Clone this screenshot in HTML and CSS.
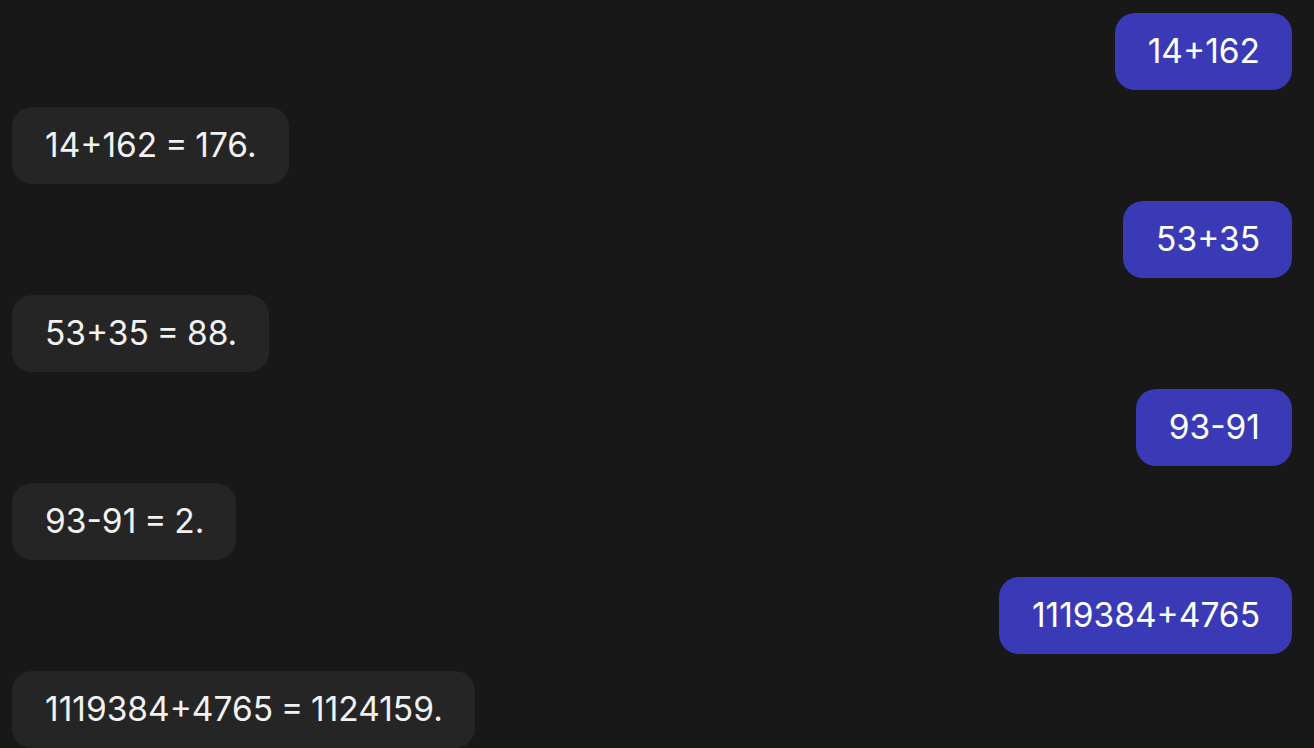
FILE: index.html
```html
<!DOCTYPE html>
<html lang="en">
<head>
    <meta charset="UTF-8">
    <meta name="viewport" content="width=device-width, initial-scale=1.0">
    <title>Chat</title>
    <link rel="stylesheet" href="styles.css">
</head>
<body>
    <div class="chat">
        <div class="msg user">14+162</div>
        <div class="msg bot">14+162 = 176.</div>
        <div class="msg user">53+35</div>
        <div class="msg bot">53+35 = 88.</div>
        <div class="msg user">93-91</div>
        <div class="msg bot">93-91 = 2.</div>
        <div class="msg user">1119384+4765</div>
        <div class="msg bot">1119384+4765 = 1124159.</div>
    </div>
</body>
</html>
```

FILE: styles.css
```css
body {
    margin: 0;
    background-color: #181818;
    color: #f2f2f2;
    font-family: Inter, "Noto Sans", sans-serif;
    overflow: hidden;
}
.chat {
    display: flex;
    flex-direction: column;
    gap: 17px;
    padding: 13px 22px 0 12px;
}
.msg {
    font-size: 33.5px;
    line-height: 37px;
    word-spacing: -1.5px;
    padding: 20px 32px 20px 33px;
    border-radius: 20px;
    white-space: nowrap;
}
.user {
    align-self: flex-end;
    background-color: #3a3ab6;
    color: #ffffff;
}
.bot {
    align-self: flex-start;
    background-color: #252525;
}
```
